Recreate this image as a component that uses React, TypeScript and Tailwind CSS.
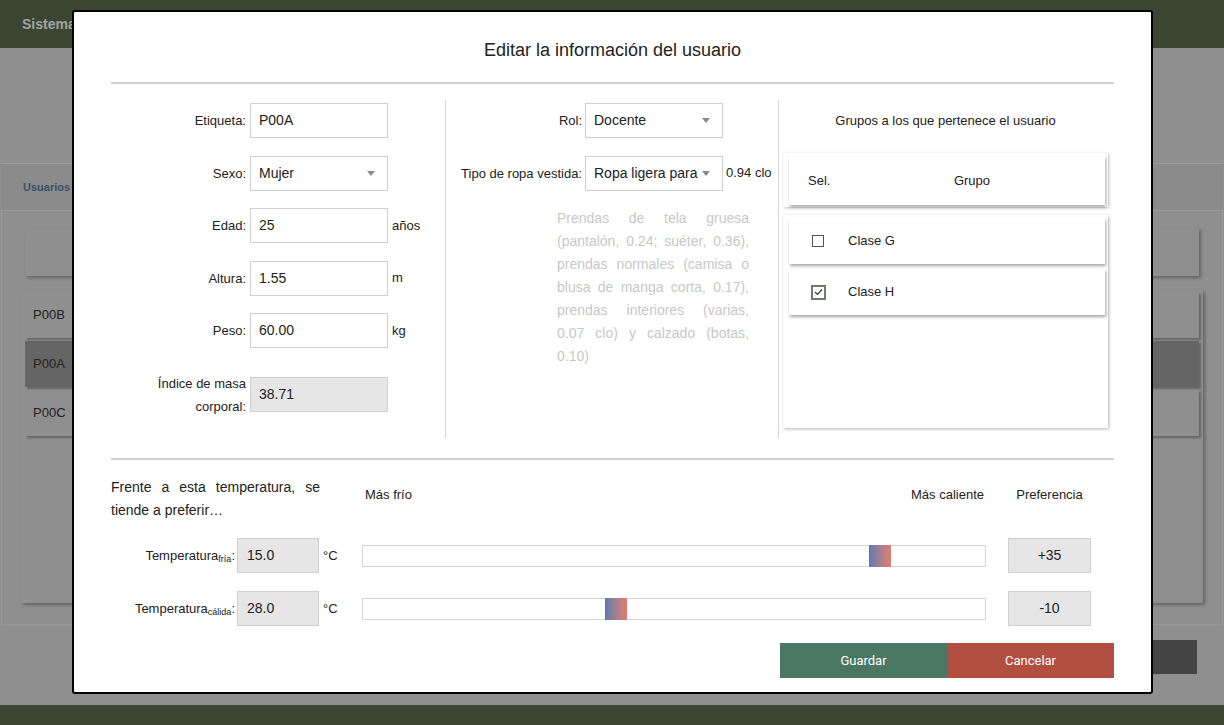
import React from "react";

const sans = "font-['Liberation_Sans',Arial,sans-serif]";

function Arrow() {
  return (
    <svg width="8" height="5" viewBox="0 0 8 5" className="shrink-0">
      <path d="M0 0h8L4 5z" fill="#8a8a8a" />
    </svg>
  );
}

function Field({
  label,
  value,
  unit,
  select,
  gray,
}: {
  label: React.ReactNode;
  value: string;
  unit?: string;
  select?: boolean;
  gray?: boolean;
}) {
  return (
    <div className="flex items-center">
      <div className="w-[139px] pr-[4px] text-right text-[13px] leading-[23px] text-[#222]">{label}</div>
      <div
        className={`flex h-[35px] w-[138px] items-center justify-between border border-[#cfcfcf] pl-[8px] pr-[12px] text-[14px] text-[#222] ${
          gray ? "bg-[#e6e6e6]" : "bg-white"
        }`}
      >
        <span>{value}</span>
        {select && <Arrow />}
      </div>
      {unit && <span className="pl-[4px] text-[13px] text-[#222]">{unit}</span>}
    </div>
  );
}

function GroupRow({ name, checked }: { name: string; checked?: boolean }) {
  return (
    <div className="flex h-[46px] items-center bg-white shadow-[1px_2px_3px_rgba(0,0,0,0.35)]">
      <div className="w-[59px] pl-[22px]">
        {checked ? (
          <div className="flex h-[15px] w-[15px] items-center justify-center border-2 border-[#6e7d66] bg-white">
            <svg width="9" height="8" viewBox="0 0 9 8">
              <path d="M1 4l2.5 2.5L8 1.5" fill="none" stroke="#333" strokeWidth="1.2" />
            </svg>
          </div>
        ) : (
          <div className="ml-[1px] h-[12px] w-[12px] border border-[#555] bg-white" />
        )}
      </div>
      <span className="text-[13px] text-[#222]">{name}</span>
    </div>
  );
}

function TempRow({ sub, value, pref }: { sub: string; value: string; pref: number }) {
  const left = ((pref + 50) / 100) * 587 + 7;
  return (
    <div className="flex items-center">
      <div className="w-[124px] text-right text-[13px] text-[#222]">
        Temperatura<sub className="text-[9px]">{sub}</sub>:
      </div>
      <div className="ml-[2px] flex h-[35px] w-[82px] items-center border border-[#cfcfcf] bg-[#e6e6e6] pl-[9px] text-[14px] text-[#222]">
        {value}
      </div>
      <div className="w-[43px] pl-[4px] text-[13px] text-[#222]">°C</div>
      <div className="relative h-[22px] w-[624px] border border-[#d6d6d6] bg-white">
        <div
          className="absolute top-[-1px] h-[22px] w-[22px] bg-gradient-to-r from-[#5a79b3] to-[#e27c6a]"
          style={{ left }}
        />
      </div>
      <div className="ml-[22px] flex h-[35px] w-[83px] items-center justify-center border border-[#cfcfcf] bg-[#e6e6e6] text-[14px] text-[#222]">
        {pref > 0 ? `+${pref}` : pref}
      </div>
    </div>
  );
}

function Background() {
  return (
    <div className="flex h-[725px] flex-col">
      <div className="flex h-[48px] items-center bg-[#3a4632] pl-[22px]">
        <span className="text-[14px] font-bold text-[#a3a3a3]">Sistema</span>
      </div>
      <div className="flex flex-1 flex-col bg-[#8f8f8f]">
        <div className="h-[115px]" />
        <div className="mx-[1px] flex h-[47px] items-center border-t border-[#9b9b9b] bg-[#8b8b8b] pl-[22px]">
          <span className="text-[11px] font-bold text-[#3f4f6c]">Usuarios</span>
        </div>
        <div className="mx-[1px] flex h-[415px] flex-col border border-[#999] px-[19px] pt-[17px]">
          <div className="mx-[4px] h-[48px] bg-[#8f8f8f] shadow-[2px_2px_3px_rgba(0,0,0,0.3)]" />
          <div className="mt-[14px] flex h-[313px] flex-col gap-[3px] bg-[#8f8f8f] px-[4px] pt-[2px] shadow-[2px_2px_3px_rgba(0,0,0,0.3)]">
            {["P00B", "P00A", "P00C"].map((p) => (
              <div
                key={p}
                className={`flex h-[46px] items-center pl-[8px] text-[13px] text-[#222] shadow-[2px_2px_2px_rgba(0,0,0,0.3)] ${
                  p === "P00A" ? "bg-[#656565]" : "bg-[#8f8f8f]"
                }`}
              >
                {p}
              </div>
            ))}
          </div>
        </div>
        <div className="flex justify-end pr-[27px] pt-[15px]">
          <div className="h-[34px] w-[200px] bg-[#444]" />
        </div>
      </div>
      <div className="h-[20px] bg-[#3a4632]" />
    </div>
  );
}

export default function App() {
  return (
    <div className={`relative h-[725px] w-[1224px] overflow-hidden ${sans}`}>
      <Background />

      <div className="absolute left-[72px] top-[10px] h-[684px] w-[1081px] rounded-[3px] border-2 border-black bg-white px-[37px]">
        <div className="flex h-[70px] items-center justify-center pt-[6px] text-[18px] text-[#222]">
          Editar la información del usuario
        </div>
        <div className="h-[2px] bg-[#cfcfcf]" />

        <div className="grid h-[374px] grid-cols-[334px_333px_335px] pb-[20px] pt-[16px]">
          <div className="flex flex-col gap-[17.5px] pt-[3px]">
            <Field label="Etiqueta:" value="P00A" />
            <Field label="Sexo:" value="Mujer" select />
            <Field label="Edad:" value="25" unit="años" />
            <Field label="Altura:" value="1.55" unit="m" />
            <Field label="Peso:" value="60.00" unit="kg" />
            <div className="mt-[6px]">
              <Field
                label={
                  <>
                    Índice de masa
                    <br />
                    corporal:
                  </>
                }
                value="38.71"
                gray
              />
            </div>
          </div>

          <div className="flex flex-col border-l border-[#d6d6d6] pt-[3px]">
            <div className="flex items-center">
              <div className="w-[139px] pr-[3px] text-right text-[13px] text-[#222]">Rol:</div>
              <div className="flex h-[35px] w-[138px] items-center justify-between border border-[#cfcfcf] pl-[8px] pr-[12px] text-[14px] text-[#222]">
                <span>Docente</span>
                <Arrow />
              </div>
            </div>
            <div className="mt-[18px] flex items-center">
              <div className="w-[139px] pr-[3px] text-right text-[13px] text-[#222]">Tipo de ropa vestida:</div>
              <div className="flex h-[35px] w-[138px] items-center justify-between border border-[#cfcfcf] pl-[8px] pr-[12px] text-[14px] text-[#222]">
                <span className="whitespace-nowrap">Ropa ligera para</span>
                <Arrow />
              </div>
              <span className="self-start pl-[3px] pt-[7px] text-[13px] text-[#222]">0.94 clo</span>
            </div>
            <p className="ml-[111px] mt-[16px] w-[192px] text-justify text-[14px] leading-[23px] text-[#c8c8c8]">
              Prendas de tela gruesa (pantalón, 0.24; suéter, 0.36), prendas normales (camisa o blusa de manga
              corta, 0.17), prendas interiores (varias, 0.07 clo) y calzado (botas, 0.10)
            </p>
          </div>

          <div className="flex flex-col border-l border-[#d6d6d6] pl-[4px] pr-[5px]">
            <div className="mt-[12px] text-center text-[13px] leading-[18px] text-[#222]">
              Grupos a los que pertenece el usuario
            </div>
            <div className="mt-[23px] bg-white pb-[2px] pl-[6px] pr-[3px] pt-[3px] shadow-[1px_1px_3px_rgba(0,0,0,0.25)]">
              <div className="flex h-[49px] items-center bg-white text-[13px] text-[#222] shadow-[1px_2px_3px_rgba(0,0,0,0.35)]">
                <span className="w-[60px] pl-[19px]">Sel.</span>
                <span className="flex-1 pr-[10px] text-center">Grupo</span>
              </div>
            </div>
            <div className="mt-[8px] flex h-[213px] flex-col gap-[5px] bg-white pl-[6px] pr-[3px] pt-[3px] shadow-[1px_1px_3px_rgba(0,0,0,0.3)]">
              <GroupRow name="Clase G" />
              <GroupRow name="Clase H" checked />
            </div>
          </div>
        </div>

        <div className="h-[2px] bg-[#cfcfcf]" />

        <div className="flex pt-[16px]">
          <p className="w-[209px] text-justify text-[14px] leading-[23px] text-[#222]">
            Frente a esta temperatura, se tiende a preferir…
          </p>
          <div className="ml-[42px] flex w-[624px] justify-between pl-[3px] pr-[2px] pt-[10px] text-[13px] leading-[18px] text-[#222]">
            <span>Más frío</span>
            <span>Más caliente</span>
          </div>
          <div className="ml-[22px] w-[83px] pt-[10px] text-center text-[13px] leading-[18px] text-[#222]">
            Preferencia
          </div>
        </div>

        <div className="mt-[16px] flex flex-col gap-[18px]">
          <TempRow sub="fría" value="15.0" pref={35} />
          <TempRow sub="cálida" value="28.0" pref={-10} />
        </div>

        <div className="mt-[17px] flex justify-end font-['Roboto',sans-serif] text-[13px] text-white">
          <button className="h-[35px] w-[167px] bg-[#4a7762]">Guardar</button>
          <button className="h-[35px] w-[167px] bg-[#b34f40]">Cancelar</button>
        </div>
      </div>
    </div>
  );
}
